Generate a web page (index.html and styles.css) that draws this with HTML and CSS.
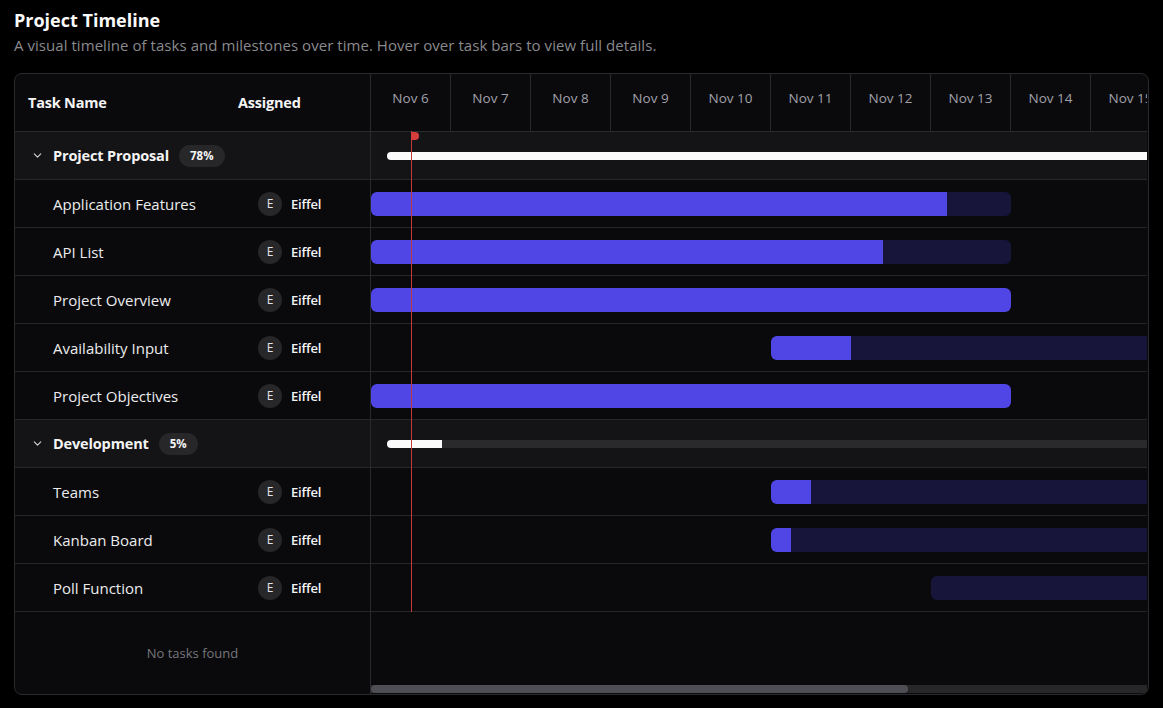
FILE: index.html
```html
<!DOCTYPE html>
<html lang="en">
<head>
<meta charset="utf-8">
<title>Project Timeline</title>
<link rel="stylesheet" href="styles.css">
</head>
<body>
<div class="page">
  <h1 class="title">Project Timeline</h1>
  <p class="subtitle">A visual timeline of tasks and milestones over time. Hover over task bars to view full details.</p>
  <div class="card">
    <div class="left">
      <div class="lhead"><span>Task Name</span><span>Assigned</span></div>
      <div class="row group">
        <svg class="chev" viewBox="0 0 24 24"><polyline points="6 9 12 15 18 9"/></svg>
        <span class="gname">Project Proposal</span><span class="badge">78%</span>
      </div>
      <div class="row task"><span class="tname">Application Features</span><span class="assignee"><span class="avatar">E</span>Eiffel</span></div>
      <div class="row task"><span class="tname">API List</span><span class="assignee"><span class="avatar">E</span>Eiffel</span></div>
      <div class="row task"><span class="tname">Project Overview</span><span class="assignee"><span class="avatar">E</span>Eiffel</span></div>
      <div class="row task"><span class="tname">Availability Input</span><span class="assignee"><span class="avatar">E</span>Eiffel</span></div>
      <div class="row task"><span class="tname">Project Objectives</span><span class="assignee"><span class="avatar">E</span>Eiffel</span></div>
      <div class="row group">
        <svg class="chev" viewBox="0 0 24 24"><polyline points="6 9 12 15 18 9"/></svg>
        <span class="gname">Development</span><span class="badge">5%</span>
      </div>
      <div class="row task"><span class="tname">Teams</span><span class="assignee"><span class="avatar">E</span>Eiffel</span></div>
      <div class="row task"><span class="tname">Kanban Board</span><span class="assignee"><span class="avatar">E</span>Eiffel</span></div>
      <div class="row task"><span class="tname">Poll Function</span><span class="assignee"><span class="avatar">E</span>Eiffel</span></div>
      <div class="empty">No tasks found</div>
    </div>
    <div class="right">
      <div class="viewport">
        <div class="canvas">
          <div class="thead">
            <div class="day">Nov 6</div><div class="day">Nov 7</div><div class="day">Nov 8</div><div class="day">Nov 9</div>
            <div class="day">Nov 10</div><div class="day">Nov 11</div><div class="day">Nov 12</div><div class="day">Nov 13</div>
            <div class="day">Nov 14</div><div class="day">Nov 15</div><div class="day">Nov 16</div><div class="day">Nov 17</div>
            <div class="day">Nov 18</div><div class="day">Nov 19</div>
          </div>
          <div class="trow group"><div class="gbar"><div class="gfill" style="width:78%"></div></div></div>
          <div class="trow"><div class="bar" style="margin-left:0px;width:640px"><div class="fill" style="width:576px"></div></div></div>
          <div class="trow"><div class="bar" style="margin-left:0px;width:640px"><div class="fill" style="width:512px"></div></div></div>
          <div class="trow"><div class="bar" style="margin-left:0px;width:640px"><div class="fill" style="width:640px"></div></div></div>
          <div class="trow"><div class="bar" style="margin-left:400px;width:640px"><div class="fill" style="width:80px"></div></div></div>
          <div class="trow"><div class="bar" style="margin-left:0px;width:640px"><div class="fill" style="width:640px"></div></div></div>
          <div class="trow group"><div class="gbar"><div class="gfill" style="width:5%"></div></div></div>
          <div class="trow"><div class="bar" style="margin-left:400px;width:640px"><div class="fill" style="width:40px"></div></div></div>
          <div class="trow"><div class="bar" style="margin-left:400px;width:640px"><div class="fill" style="width:20px"></div></div></div>
          <div class="trow"><div class="bar" style="margin-left:560px;width:480px"><div class="fill" style="width:0px"></div></div></div>
          <div class="today"><span class="flag"></span></div>
        </div>
      </div>
      <div class="scrollbar"><div class="thumb"></div></div>
    </div>
  </div>
</div>
</body>
</html>
```

FILE: styles.css
```css
* { box-sizing: border-box; }
html, body { margin: 0; padding: 0; background: #000; }
body {
  font-family: "Open Sans", "Liberation Sans", sans-serif;
  color: #fafafa;
}
.page { padding: 8px 14px 0 14px; }
.title {
  margin: 0;
  font-size: 18px;
  line-height: 24px;
  font-weight: 700;
  color: #fafafa;
}
.subtitle {
  margin: 3px 0 0 0;
  font-size: 15px;
  line-height: 20px;
  color: #8a8a8e;
  letter-spacing: 0.05px;
}
.card {
  margin-top: 18px;
  height: 622px;
  display: flex;
  border: 1px solid #2a2a2e;
  border-radius: 8px;
  background: #0a0a0c;
  overflow: hidden;
}
.left {
  width: 356px;
  flex: none;
  border-right: 1px solid #2a2a2e;
  display: flex;
  flex-direction: column;
}
.lhead {
  height: 58px;
  flex: none;
  border-bottom: 1px solid #2a2a2e;
  display: grid;
  grid-template-columns: 210px 1fr;
  align-items: center;
  padding-left: 13px;
  padding-bottom: 1px;
  font-size: 14.5px;
  font-weight: 700;
  color: #f4f4f5;
  letter-spacing: -0.2px;
}
.row {
  height: 48px;
  flex: none;
  border-bottom: 1px solid #27272a;
  display: flex;
  align-items: center;
}
.row.group {
  background: #141416;
  padding-left: 16px;
}
.chev {
  width: 13px;
  height: 13px;
  fill: none;
  stroke: #d4d4d8;
  stroke-width: 2;
  stroke-linecap: round;
  stroke-linejoin: round;
  margin-right: 9px;
}
.gname {
  font-size: 14.5px;
  font-weight: 700;
  color: #f4f4f5;
  letter-spacing: -0.15px;
}
.badge {
  margin-left: 10px;
  height: 22px;
  padding: 0 11px;
  border-radius: 11px;
  background: #27272a;
  font-size: 11.5px;
  font-weight: 700;
  line-height: 22px;
  color: #f4f4f5;
}
.row.task {
  display: grid;
  grid-template-columns: 205px 1fr;
  padding-left: 38px;
}
.tname {
  font-size: 15px;
  color: #ececee;
  padding-top: 1px;
}
.assignee {
  display: flex;
  align-items: center;
  gap: 9px;
  font-size: 13px;
  font-weight: 600;
  color: #f4f4f5;
  letter-spacing: -0.2px;
}
.avatar {
  width: 24px;
  height: 24px;
  border-radius: 50%;
  background: #27272a;
  display: flex;
  align-items: center;
  justify-content: center;
  font-size: 12px;
  font-weight: 400;
  color: #e4e4e7;
  letter-spacing: 0;
}
.empty {
  flex: 1;
  display: flex;
  align-items: center;
  justify-content: center;
  font-size: 13px;
  color: #76767d;
}
.right {
  flex: 1;
  min-width: 0;
  display: flex;
  flex-direction: column;
  padding-right: 1px;
}
.viewport {
  flex: 1;
  overflow: hidden;
}
.canvas {
  position: relative;
  width: 1120px;
}
.thead {
  height: 58px;
  display: flex;
  border-bottom: 1px solid #2a2a2e;
}
.day {
  width: 80px;
  flex: none;
  border-right: 1px solid #2a2a2e;
  display: flex;
  align-items: center;
  justify-content: center;
  padding-bottom: 10px;
  font-size: 13.5px;
  color: #a1a1aa;
}
.trow {
  height: 48px;
  border-bottom: 1px solid #27272a;
  display: flex;
  align-items: center;
}
.trow.group { background: #141416; }
.gbar {
  margin-left: 16px;
  width: 1104px;
  height: 8px;
  border-radius: 4px;
  background: #2a2a2d;
  overflow: hidden;
}
.gfill {
  height: 100%;
  background: #fafafa;
}
.bar {
  height: 24px;
  border-radius: 6px;
  background: #17163a;
  overflow: hidden;
  flex: none;
}
.fill {
  height: 100%;
  background: #4f46e5;
}
.today {
  position: absolute;
  left: 40px;
  top: 57px;
  width: 1px;
  height: 481px;
  background: #c0393b;
}
.flag {
  position: absolute;
  left: 0;
  top: 1px;
  width: 8px;
  height: 8px;
  border-radius: 0 4px 4px 0;
  background: #d63d3d;
}
.scrollbar {
  flex: none;
  height: 8px;
  margin-bottom: 1px;
  background: #27272a;
}
.thumb {
  width: 537px;
  height: 100%;
  border-radius: 4px;
  background: #4e4e55;
}
```
